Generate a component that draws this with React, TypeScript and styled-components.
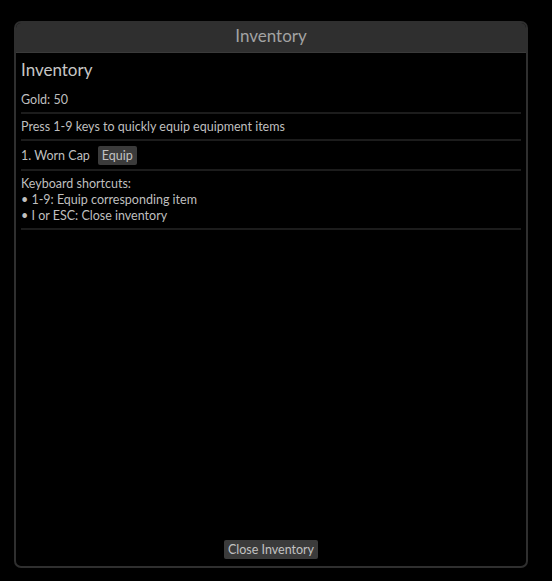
import * as React from "react";
import styled, { createGlobalStyle } from "styled-components";

const GlobalStyle = createGlobalStyle`
  html, body {
    margin: 0;
    padding: 0;
    background: #000;
  }
  body {
    font-family: "Lato", "Noto Sans", sans-serif;
    color: #bfbfbf;
  }
`;

const Page = styled.div`
  width: 552px;
  height: 581px;
  padding: 21px 0 0 14px;
  box-sizing: border-box;
`;

const Window = styled.div`
  width: 514px;
  height: 547px;
  box-sizing: border-box;
  border: 2px solid #2f2f2f;
  border-radius: 7px;
  background: #000;
  display: flex;
  flex-direction: column;
  overflow: hidden;
`;

const TitleBar = styled.div`
  height: 30px;
  box-sizing: border-box;
  padding-bottom: 4px;
  flex: none;
  background: #2f2f2f;
  display: flex;
  align-items: center;
  justify-content: center;
  font-size: 17px;
  color: #a3a3a3;
  border-bottom: 1px solid #3a3a3a;
`;

const Body = styled.div`
  flex: 1;
  display: flex;
  flex-direction: column;
  padding: 1px 5px 4px 5px;
`;

const Heading = styled.h1`
  margin: 0 0 4px 0;
  padding: 3px 0 0 0;
  font-size: 17px;
  font-weight: 400;
  color: #c6c6c6;
  line-height: 26px;
`;

const Section = styled.div`
  padding: 5px 0 4px 0;
  border-bottom: 2px solid #1c1c1c;
  font-size: 12.5px;
  line-height: 16px;
  display: flex;
  flex-direction: column;
`;

const ItemRow = styled.div`
  display: flex;
  align-items: center;
  gap: 8px;
`;

const Button = styled.button`
  font-family: inherit;
  font-size: 12.5px;
  color: #c2c2c2;
  background: #3b3b3b;
  border: none;
  border-radius: 2px;
  padding: 1.5px 4px;
  line-height: 16px;
  cursor: pointer;
`;

const Spacer = styled.div`
  flex: 1;
`;

const Footer = styled.div`
  display: flex;
  justify-content: center;
  padding-bottom: 3px;
`;

export default function App() {
  return (
    <>
      <GlobalStyle />
      <Page>
        <Window>
          <TitleBar>Inventory</TitleBar>
          <Body>
            <Heading>Inventory</Heading>
            <Section>Gold: 50</Section>
            <Section>Press 1-9 keys to quickly equip equipment items</Section>
            <Section>
              <ItemRow>
                <span>1. Worn Cap</span>
                <Button>Equip</Button>
              </ItemRow>
            </Section>
            <Section>
              <span>Keyboard shortcuts:</span>
              <span>• 1-9: Equip corresponding item</span>
              <span>• I or ESC: Close inventory</span>
            </Section>
            <Spacer />
            <Footer>
              <Button>Close Inventory</Button>
            </Footer>
          </Body>
        </Window>
      </Page>
    </>
  );
}
